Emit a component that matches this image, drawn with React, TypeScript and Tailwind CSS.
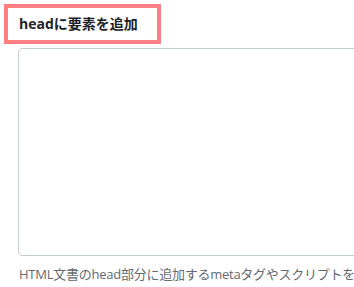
// Settings field: "headに要素を追加"
function App() {
  return (
    <div
      className="w-[354px] h-[287px] overflow-hidden bg-white text-[#1d2327]"
      style={{ fontFamily: '"Segoe UI", "Open Sans", "Noto Sans CJK JP", sans-serif' }}
    >
      <div className="pt-[4px] pl-[4px]">
        <div className="w-[157px] h-[40px] border-[4px] border-[#fd7f82] flex items-center pl-[11px]">
          <span className="text-[14px] font-bold leading-none">headに要素を追加</span>
        </div>
      </div>
      <div className="pl-[18px] pt-[4px]">
        <textarea className="block w-[400px] h-[208px] border border-[#c3ccd3] rounded-[4px] bg-white resize-none outline-none" />
        <p className="mt-[9px] ml-[1px] text-[13px] leading-[18px] tracking-[-0.25px] text-[#646970] whitespace-nowrap">
          HTML文書のhead部分に追加するmetaタグやスクリプトを
        </p>
      </div>
    </div>
  );
}

export default App;
